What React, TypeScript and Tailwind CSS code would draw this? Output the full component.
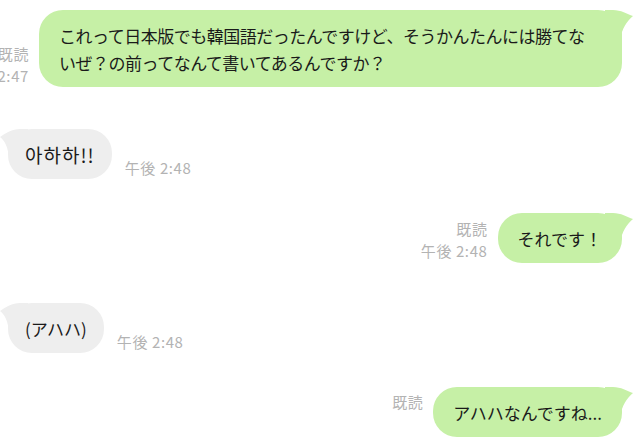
import type { ReactNode } from 'react'

const FONT = { fontFamily: '"Noto Sans CJK JP", "Noto Sans", sans-serif' }

/** Tail on the upper right of an outgoing (green) bubble. */
function RightTail() {
  return (
    <svg className="absolute top-0 right-[-11px]" width="28" height="30" viewBox="0 0 28 30" aria-hidden>
      <path d="M0 0 H8 C16 0 22 4 28 6 C22 11 17 18 15 30 H0 Z" fill="#c6f0a6" />
    </svg>
  )
}

/** Tail on the upper left of an incoming (gray) bubble. */
function LeftTail() {
  return (
    <svg className="absolute top-0 left-[-8px]" width="28" height="30" viewBox="0 0 28 30" aria-hidden>
      <path d="M28 0 H20 C12 0 6 4 0 8 C5 12 8 18 9 30 H28 Z" fill="#eeeeee" />
    </svg>
  )
}

function Status({ lines }: { lines: string[] }) {
  return (
    <div className="flex shrink-0 flex-col items-end text-[15px] leading-[22px] tracking-[0.6px] whitespace-nowrap text-[#b3b3b3]">
      {lines.map((l) => (
        <span key={l}>{l}</span>
      ))}
    </div>
  )
}

function Outgoing({ children, className = '' }: { children: ReactNode; className?: string }) {
  return (
    <div
      className={`relative shrink-0 rounded-[24px] bg-[#c6f0a6] px-[20px] pt-[12px] pb-[11px] text-[17px] leading-[27px] whitespace-nowrap text-[#1a1a1a] ${className}`}
    >
      <RightTail />
      <div className="relative">{children}</div>
    </div>
  )
}

function Incoming({ children, korean = false }: { children: ReactNode; korean?: boolean }) {
  return (
    <div
      className={`relative shrink-0 rounded-[24px] bg-[#eeeeee] px-[17px] pt-[12px] pb-[11px] leading-[27px] whitespace-nowrap text-[#1a1a1a] ${korean ? 'text-[19px] tracking-[1px]' : 'text-[17px]'}`}
      style={korean ? { fontFamily: '"Noto Sans CJK KR", "Noto Sans", sans-serif' } : undefined}
    >
      <LeftTail />
      <div className="relative">{children}</div>
    </div>
  )
}

export default function App() {
  return (
    <div className="h-[439px] w-[640px] overflow-hidden bg-white" style={FONT}>
      <div className="flex flex-col pt-[10px]">
        <div className="flex items-end justify-end gap-[10px] pr-[18px]">
          <Status lines={['既読', '午後 2:47']} />
          <Outgoing className="w-[583px] tracking-[-0.5px]">
            <div>これって日本版でも韓国語だったんですけど、そうかんたんには勝てな</div>
            <div>いぜ？の前ってなんて書いてあるんですか？</div>
          </Outgoing>
        </div>

        <div className="mt-[42px] flex items-end gap-[13px] pl-[8px]">
          <Incoming korean>아하하!!</Incoming>
          <Status lines={['午後 2:48']} />
        </div>

        <div className="mt-[34px] flex items-end justify-end gap-[10px] pr-[18px]">
          <div className="pb-[1px]">
            <Status lines={['既読', '午後 2:48']} />
          </div>
          <Outgoing>それです！</Outgoing>
        </div>

        <div className="mt-[40px] flex items-end gap-[13px] pl-[8px]">
          <Incoming>(アハハ)</Incoming>
          <Status lines={['午後 2:48']} />
        </div>

        <div className="mt-[34px] flex items-start justify-end gap-[10px] pr-[18px]">
          <div className="pt-[4px]">
            <Status lines={['既読']} />
          </div>
          <Outgoing>アハハなんですね...</Outgoing>
        </div>
      </div>
    </div>
  )
}
